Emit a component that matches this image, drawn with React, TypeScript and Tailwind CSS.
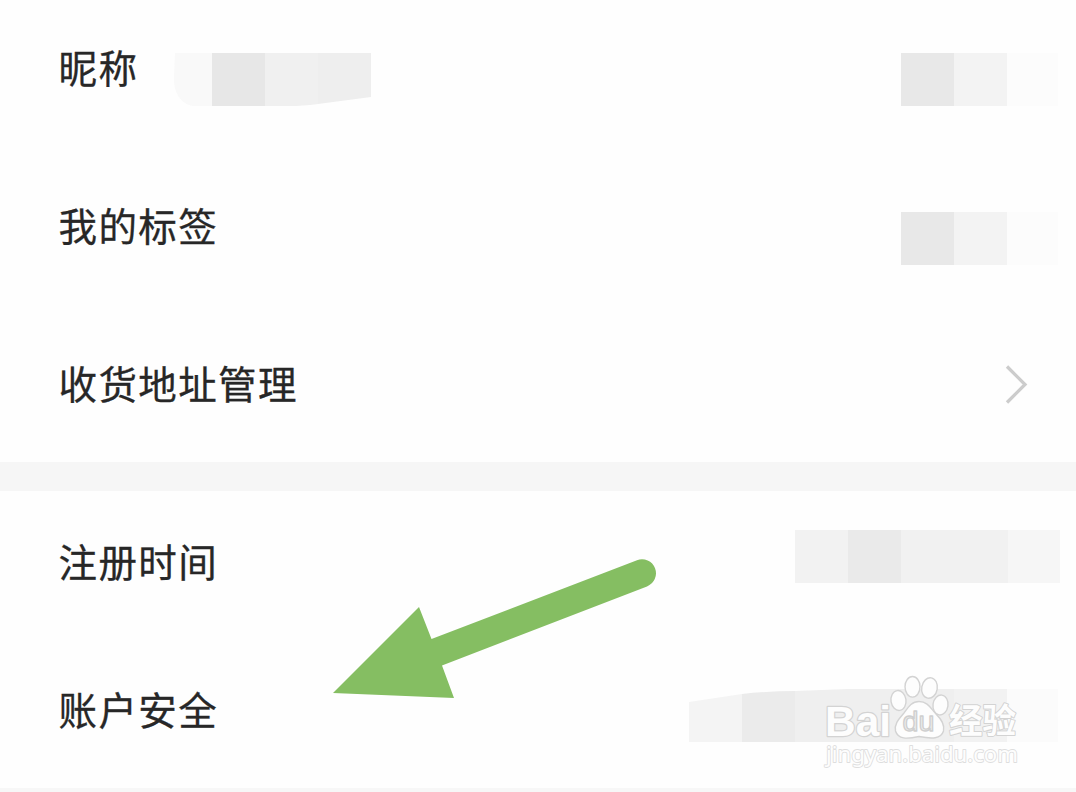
import clsx from "clsx";
import type { ReactNode } from "react";

type RowProps = {
  label: string;
  className: string;
  children?: ReactNode;
};

const Row = ({ label, className, children }: RowProps) => (
  <div className={clsx("flex items-start pl-[58.5px]", className)}>
    <span className="h-10 shrink-0 text-[38.5px] leading-10 tracking-[1.4px] text-[#272727] [-webkit-text-stroke:0.3px_#272727]">
      {label}
    </span>
    {children}
  </div>
);

const HiddenTag = () => (
  <div className="mt-[8px] mr-[18px] ml-auto flex h-[53px]">
    <div className="w-[53px] bg-[#e8e8e8]" />
    <div className="w-[53px] bg-[#f3f3f3]" />
    <div className="w-[51px] bg-[#fcfcfc]" />
  </div>
);

const HiddenName = () => (
  <svg className="mt-[5px] ml-[34.700px] h-[56px] w-[200px]" viewBox="173 51 200 56">
    <path d="M175 53H212V106H193C180 104 173 91 174 76Z" fill="#f9f9f9" />
    <path d="M212 53H265V106H212Z" fill="#e7e7e7" />
    <path d="M265 53H318V104Q302 106 290 106H265Z" fill="#f0f0f0" />
    <path d="M318 53H371V97L318 104Z" fill="#eeeeee" />
  </svg>
);

const HiddenAccount = () => (
  <svg className="mt-[-1px] mr-[18px] ml-auto h-[56px] w-[369px]" viewBox="689 687 369 56">
    <path d="M689 702L742 694V742H689Z" fill="#f4f4f4" />
    <path d="M742 694Q768 691 795 691V742H742Z" fill="#ebebeb" />
    <path d="M795 691L848 689H954V742H795Z" fill="#efefef" />
    <path d="M954 689H1007V742H954Z" fill="#f2f2f2" />
    <path d="M1007 689H1058V742H1007Z" fill="#fbfbfb" />
  </svg>
);

const Arrow = () => (
  <svg className="absolute top-[550px] left-[325px]" width="340" height="155" viewBox="325 550 340 155">
    <path
      d="M333 693L419 607L431.500 639L637 560.300A13.900 13.900 0 0 1 647 586.400L442 665.500L454 698Z"
      fill="#85be62"
    />
  </svg>
);

const Watermark = () => (
  <svg
    className="absolute top-[670px] left-[815px]"
    width="215"
    height="105"
    viewBox="815 670 215 105"
    fill="#fdfdfd"
    stroke="#d3d3d3"
    strokeLinejoin="round"
  >
    <text
      x="825"
      y="736"
      fontSize="43"
      fontFamily="'Liberation Sans', sans-serif"
      fontWeight="700"
      strokeWidth="2.500"
      paintOrder="stroke"
      textLength="66"
      lengthAdjust="spacingAndGlyphs"
    >
      Bai
    </text>
    <g strokeWidth="1.400">
      <ellipse cx="898.500" cy="700.500" rx="7.500" ry="10" transform="rotate(-8 898.500 700.500)" />
      <ellipse cx="912.500" cy="686.800" rx="7.500" ry="10.300" />
      <ellipse cx="929.500" cy="688" rx="7.800" ry="10.300" transform="rotate(10 929.500 688)" />
      <ellipse cx="940.500" cy="705" rx="7.500" ry="10" transform="rotate(8 940.500 705)" />
      <path d="M919 701.500C928 701.500 931 709 936 714C941 719 945 724 943.500 731C941 739 932 739 919 736.500C907 739 898 739.500 895.500 731C894 723 900 718 904 713C909 706 912 701.500 919 701.500Z" />
    </g>
    <text
      x="902.500"
      y="731"
      fontSize="27"
      fontFamily="'Liberation Sans', sans-serif"
      fill="#eeeeee"
      stroke="#cfcfcf"
      strokeWidth="1.300"
      textLength="32"
      lengthAdjust="spacingAndGlyphs"
    >
      du
    </text>
    <text
      x="949"
      y="733"
      fontSize="34"
      fontFamily="'Noto Sans CJK SC', sans-serif"
      fontWeight="700"
      strokeWidth="2"
      paintOrder="stroke"
      textLength="67"
      lengthAdjust="spacingAndGlyphs"
    >
      经验
    </text>
    <text
      x="826"
      y="762"
      fontSize="22"
      fontFamily="'Noto Sans', sans-serif"
      stroke="#dedede"
      strokeWidth="1.800"
      paintOrder="stroke"
      textLength="192"
      lengthAdjust="spacingAndGlyphs"
    >
      jingyan.baidu.com
    </text>
  </svg>
);

const App = () => {
  return (
    <div className="relative h-[792px] w-[1076px] overflow-hidden bg-[#fefefe] font-['Noto_Sans_CJK_SC',sans-serif]">
      <Row label="昵称" className="h-[148px] pt-[46px]">
        <HiddenName />
        <div className="-mt-px ml-auto">
          <HiddenTag />
        </div>
      </Row>
      <Row label="我的标签" className="h-[158px] pt-[56px]">
        <HiddenTag />
      </Row>
      <Row label="收货地址管理" className="h-[156px] pt-[56px]">
        <svg
          className="mt-[3px] mr-[47px] ml-auto h-10 w-6"
          viewBox="0 0 24 40"
          fill="none"
          stroke="#cccccc"
          strokeWidth="3.300"
        >
          <path d="M2 1.500L20 19.500L2 37.500" />
        </svg>
      </Row>

      <div className="h-[29px] bg-[#f6f6f6]" />

      <Row label="注册时间" className="h-[148px] pt-[49px]">
        <div className="mt-[-10px] mr-4 ml-auto flex h-[53px]">
          <div className="w-[53px] bg-[#f2f2f2]" />
          <div className="w-[53px] bg-[#eaeaea]" />
          <div className="w-[107px] bg-[#f1f1f1]" />
          <div className="w-[52px] bg-[#f6f6f6]" />
        </div>
      </Row>
      <Row label="账户安全" className="h-[149px] pt-[49px]">
        <HiddenAccount />
      </Row>
      <div className="h-1 bg-[#f7f7f7]" />

      <Arrow />
      <Watermark />
    </div>
  );
};

export default App;
